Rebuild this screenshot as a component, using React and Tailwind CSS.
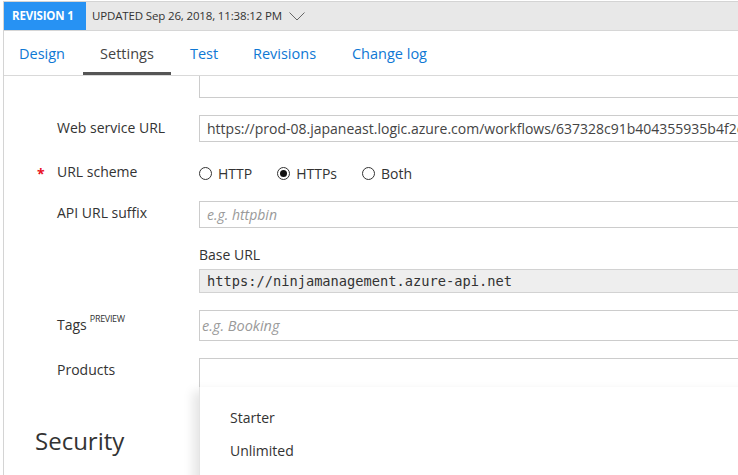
const tabs = [
    { label: 'Design', w: 'w-[76px]' },
    { label: 'Settings', w: 'w-[88px] ml-[3px]', active: true },
    { label: 'Test', w: 'w-[66px]' },
    { label: 'Revisions', w: 'w-[95px]' },
    { label: 'Change log', w: 'w-[115px]' },
];

const Radio = ({ checked, label }) => (
    <div className="flex items-center gap-[6px]">
        <span className="w-[13px] h-[13px] rounded-full border border-[#333] flex items-center justify-center bg-white">
            {checked && <span className="w-[7px] h-[7px] rounded-full bg-[#111]" />}
        </span>
        <span className="text-[14px] text-[#333]">{label}</span>
    </div>
);

const App = () => {
    return (
        <div className="w-[738px] h-[475px] overflow-hidden bg-white pt-px pl-[3px] font-['Open_Sans',sans-serif] text-[#333]">
            <div className="h-full border-t border-l border-[#d4d4d4]">
                {/* Revision header */}
                <div className="h-[29px] bg-[#e8e8e8] flex items-center border-b border-[#d6d6d6]">
                    <div className="h-full w-[82px] shrink-0 bg-[#2792f3] flex items-center pl-[8px] text-white text-[11.5px] font-bold tracking-[-0.2px]">
                        REVISION 1
                    </div>
                    <span className="ml-[6px] text-[11.5px] text-[#333] tracking-[-0.15px]">UPDATED Sep 26, 2018, 11:38:12 PM</span>
                    <svg className="ml-[7px] mt-[1px]" width="16" height="9" viewBox="0 0 16 9" fill="none">
                        <polyline points="0.5,0.5 8,8 15.5,0.5" stroke="#666" strokeWidth="1" />
                    </svg>
                </div>

                {/* Tabs */}
                <div className="h-[45px] flex border-b border-[#d9d9d9]">
                    {tabs.map((t) => (
                        <div key={t.label} className={`${t.w} shrink-0 relative flex items-center justify-center text-[14.5px] ${t.active ? 'text-[#444]' : 'text-[#0f78d4]'}`}>
                            <span className="mt-[2px]">{t.label}</span>
                            {t.active && <div className="absolute left-0 right-0 bottom-0 h-[3px] bg-[#555]" />}
                        </div>
                    ))}
                </div>

                {/* Form */}
                <div className="pl-[53px] text-[14px]">
                    <div className="ml-[142px] h-[22px] border-l border-b border-[#ccc] w-[600px]" />

                    <div className="flex mt-[17px]">
                        <div className="w-[142px] shrink-0 pt-[2px]">Web service URL</div>
                        <div className="w-[600px] shrink-0 h-[27px] border border-[#ccc] flex items-center pl-[7px] text-[14px] text-[#444] whitespace-nowrap overflow-hidden">
                            https://prod-08.japaneast.logic.azure.com/workflows/637328c91b404355935b4f2e1a7c
                        </div>
                    </div>

                    <div className="flex mt-[17px] h-[27px] items-center relative">
                        <span className="absolute -left-[20px] top-[4px] text-[#e81123] text-[14px] font-bold">*</span>
                        <div className="w-[142px] shrink-0 -mt-[3px]">URL scheme</div>
                        <div className="flex items-center gap-[25px] pt-[1px]">
                            <Radio label="HTTP" />
                            <Radio label="HTTPs" checked />
                            <Radio label="Both" />
                        </div>
                    </div>

                    <div className="flex mt-[15px]">
                        <div className="w-[142px] shrink-0 pt-px">API URL suffix</div>
                        <div className="w-[600px] shrink-0 h-[27px] border border-[#ccc] flex items-center pl-[7px] text-[14px] italic text-[#9a9a9a]">
                            e.g. httpbin
                        </div>
                    </div>

                    <div className="ml-[142px] mt-[17px] h-[20px] leading-[20px]">Base URL</div>
                    <div className="ml-[142px] mt-[4px] w-[600px] h-[24px] bg-[#eeeeee] border border-[#d2d2d2] flex items-center pl-[7px] font-['DejaVu_Sans_Mono',monospace] text-[13.7px] text-[#333]">
                        https://ninjamanagement.azure-api.net
                    </div>

                    <div className="flex mt-[17px]">
                        <div className="w-[142px] shrink-0 pt-[5px] leading-[20px]">
                            Tags<sup className="ml-[3px] text-[9px] tracking-[-0.3px] align-[4px]">PREVIEW</sup>
                        </div>
                        <div className="w-[600px] shrink-0 h-[31px] border border-[#ccc] flex items-center pl-[2px] text-[14.5px] italic text-[#9a9a9a]">
                            e.g. Booking
                        </div>
                    </div>

                    <div className="flex mt-[17px]">
                        <div className="w-[142px] shrink-0 pt-[2px] leading-[20px]">Products</div>
                        <div className="relative w-[600px] shrink-0 h-[30px] border border-[#ccc]">
                            <div className="absolute -left-px top-full w-[600px] h-[120px] bg-white border-l border-[#e4e4e4] shadow-[-6px_4px_10px_rgba(0,0,0,0.10)] pt-[14px] pl-[30px] z-10">
                                <div className="h-[33px] flex items-center">Starter</div>
                                <div className="h-[33px] flex items-center">Unlimited</div>
                            </div>
                        </div>
                    </div>

                    <h2 className="-ml-[22px] mt-[37px] text-[24px] leading-[32px] text-[#333]">Security</h2>
                </div>
            </div>
        </div>
    );
};

export default App;
